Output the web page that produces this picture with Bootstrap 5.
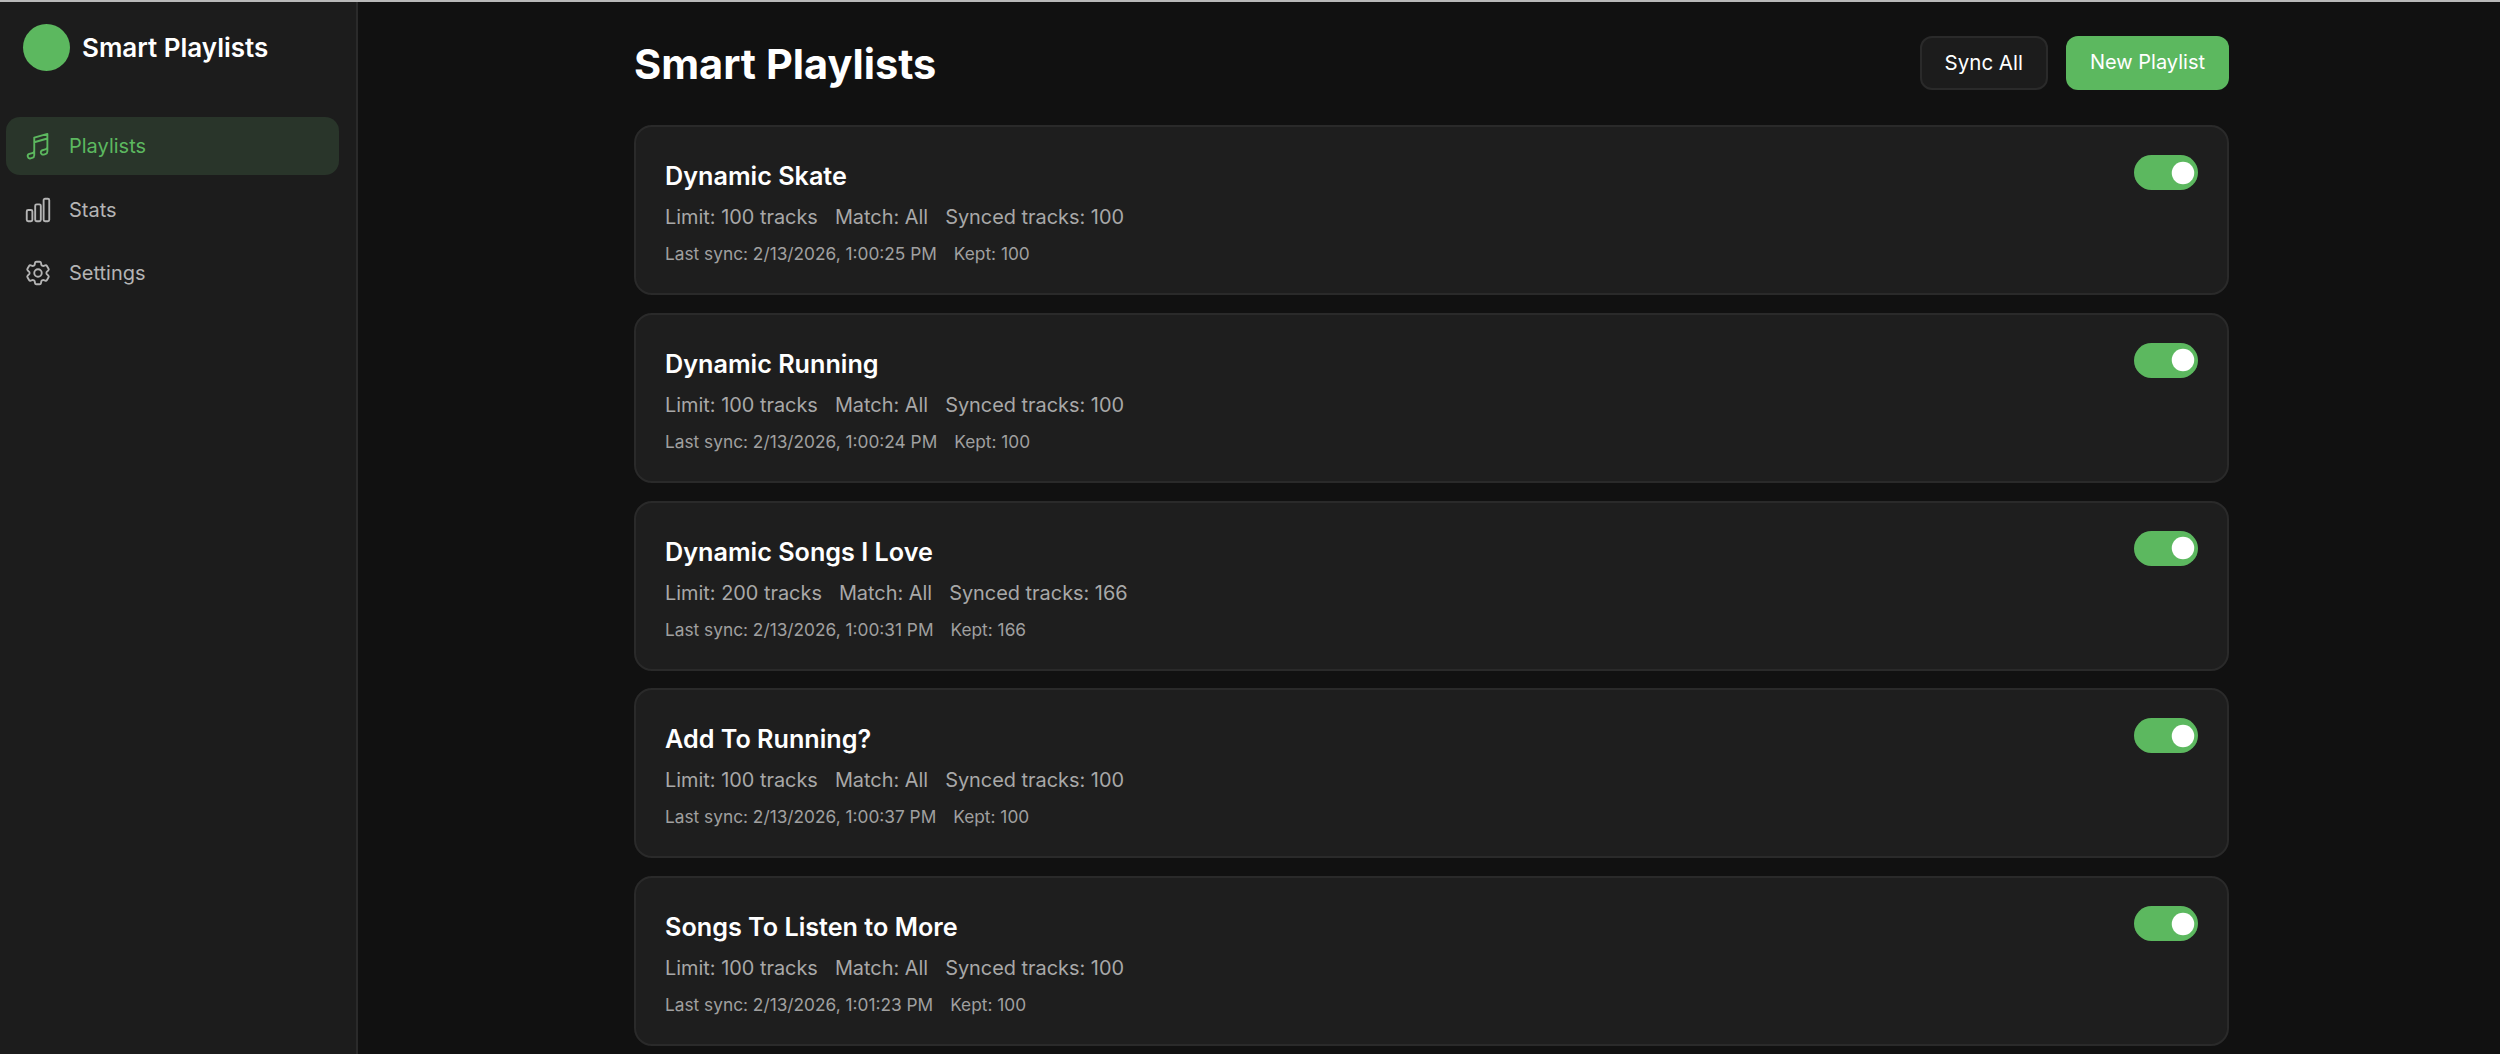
<!DOCTYPE html>
<html lang="en">
  <head>
    <meta charset="UTF-8" />
    <title>Smart Playlists</title>
    <meta name="viewport" content="width=device-width, initial-scale=1" />
    <link href="https://cdn.jsdelivr.net/npm/bootstrap@5.3.3/dist/css/bootstrap.min.css" rel="stylesheet" />
    <style>
      html, body {
        height: 100%;
        overflow: hidden;
      }
      body {
        font-family: "Inter", "Liberation Sans", sans-serif;
        background-color: #111111;
        color: #ffffff;
        border-top: 2px solid #b9b9b9;
      }
      .app-shell {
        height: 100%;
      }
      .side-panel {
        width: 358px;
        flex: 0 0 358px;
        background-color: #1c1c1c;
        border-right: 2px solid #2a2a2a;
        padding: 22px 17px 0 6px;
      }
      .brand-row {
        padding-left: 17px;
        gap: 12px;
        margin-bottom: 46px;
      }
      .brand-dot {
        width: 47px;
        height: 47px;
        border-radius: 50%;
        background-color: #5cb85f;
      }
      .brand-name {
        font-size: 26px;
        font-weight: 600;
      }
      .side-nav {
        gap: 5.5px;
      }
      .side-link {
        height: 58px;
        padding-left: 17px;
        gap: 16px;
        border-radius: 14px;
        font-size: 20px;
        color: #b4b4b4;
        text-decoration: none;
      }
      .side-link.is-active {
        background-color: #29352a;
        color: #5cb85f;
      }
      .side-link svg {
        width: 30px;
        height: 30px;
        flex: none;
      }
      .main-pane {
        padding-left: 5px;
      }
      .page-wrap {
        width: 1595px;
      }
      .page-head {
        height: 88px;
        padding-top: 34px;
        margin-bottom: 35px;
      }
      .page-name {
        font-size: 41.5px;
        font-weight: 700;
        margin: 3px 0 0;
      }
      .head-actions {
        gap: 18px;
      }
      .btn-sync, .btn-new {
        height: 54px;
        border-radius: 12px;
        font-size: 20px;
        font-weight: 400;
        padding: 0 24px;
      }
      .btn-sync {
        background-color: #1c1c1c;
        border: 2px solid #2a2a2a;
        color: #ffffff;
        font-size: 20.5px;
        padding: 0 23px;
      }
      .btn-new {
        background-color: #5cb85f;
        border: 0;
        color: #ffffff;
        padding-bottom: 2px;
      }
      .pl-item {
        height: 170px;
        background-color: #1e1e1e;
        border: 2px solid #2a2a2a;
        border-radius: 18px;
        padding: 28px 29px;
        margin-bottom: 17.75px;
      }
      .pl-name {
        font-size: 25.2px;
        font-weight: 600;
        line-height: 34px;
        margin: 4px 0 10px;
      }
      .pl-meta {
        font-size: 19.9px;
        line-height: 28px;
        color: #a8a8a8;
        gap: 17px;
        margin-bottom: 11px;
      }
      .pl-sub {
        font-size: 17.3px;
        line-height: 24px;
        color: #a0a0a0;
        gap: 17px;
      }
      .form-switch .pl-toggle {
        width: 64px;
        height: 35px;
        margin: 0;
        border: 0;
        border-radius: 18px;
        background-color: #5cb85f;
        background-size: 30px;
        background-position: right 2px center;
      }
    </style>
  </head>
  <body>
    <div class="app-shell d-flex">
      <aside class="side-panel">
        <div class="brand-row d-flex align-items-center">
          <span class="brand-dot"></span>
          <span class="brand-name">Smart Playlists</span>
        </div>
        <nav class="side-nav d-flex flex-column">
          <a class="side-link is-active d-flex align-items-center" href="#">
            <svg viewBox="0 0 24 24" fill="none" stroke="currentColor" stroke-width="1.5" stroke-linecap="round" stroke-linejoin="round"><path d="m9 9 10.5-3m0 6.553v3.75a2.25 2.25 0 0 1-1.632 2.163l-1.32.377a1.803 1.803 0 1 1-.99-3.467l2.31-.66a2.25 2.25 0 0 0 1.632-2.163Zm0 0V2.25L9 5.25v10.303m0 0v3.75a2.25 2.25 0 0 1-1.632 2.163l-1.32.377a1.803 1.803 0 0 1-.99-3.467l2.31-.66A2.25 2.25 0 0 0 9 15.553Z"/></svg>
            Playlists
          </a>
          <a class="side-link d-flex align-items-center" href="#">
            <svg viewBox="0 0 24 24" fill="none" stroke="currentColor" stroke-width="1.5" stroke-linecap="round" stroke-linejoin="round"><path d="M3 13.125C3 12.504 3.504 12 4.125 12h2.25c.621 0 1.125.504 1.125 1.125v6.75C7.5 20.496 6.996 21 6.375 21h-2.25A1.125 1.125 0 0 1 3 19.875v-6.75ZM9.75 8.625c0-.621.504-1.125 1.125-1.125h2.25c.621 0 1.125.504 1.125 1.125v11.25c0 .621-.504 1.125-1.125 1.125h-2.25a1.125 1.125 0 0 1-1.125-1.125V8.625ZM16.5 4.125c0-.621.504-1.125 1.125-1.125h2.25C20.496 3 21 3.504 21 4.125v15.75c0 .621-.504 1.125-1.125 1.125h-2.25a1.125 1.125 0 0 1-1.125-1.125V4.125Z"/></svg>
            Stats
          </a>
          <a class="side-link d-flex align-items-center" href="#">
            <svg viewBox="0 0 24 24" fill="none" stroke="currentColor" stroke-width="1.5" stroke-linecap="round" stroke-linejoin="round"><path d="M9.594 3.94c.09-.542.56-.94 1.11-.94h2.593c.55 0 1.02.398 1.11.94l.213 1.281c.063.374.313.686.645.87.074.04.147.083.22.127.325.196.72.257 1.075.124l1.217-.456a1.125 1.125 0 0 1 1.37.49l1.296 2.247a1.125 1.125 0 0 1-.26 1.431l-1.003.827c-.293.241-.438.613-.43.992a7.723 7.723 0 0 1 0 .255c-.008.378.137.75.43.991l1.004.827c.424.35.534.955.26 1.43l-1.298 2.247a1.125 1.125 0 0 1-1.369.491l-1.217-.456c-.355-.133-.75-.072-1.076.124a6.47 6.47 0 0 1-.22.128c-.331.183-.581.495-.644.869l-.213 1.281c-.09.543-.56.94-1.11.94h-2.594c-.55 0-1.019-.398-1.11-.94l-.213-1.281c-.062-.374-.312-.686-.644-.87a6.52 6.52 0 0 1-.22-.127c-.325-.196-.72-.257-1.076-.124l-1.217.456a1.125 1.125 0 0 1-1.369-.49l-1.297-2.247a1.125 1.125 0 0 1 .26-1.431l1.004-.827c.292-.24.437-.613.43-.991a6.932 6.932 0 0 1 0-.255c.007-.38-.138-.751-.43-.992l-1.004-.827a1.125 1.125 0 0 1-.26-1.43l1.297-2.247a1.125 1.125 0 0 1 1.37-.491l1.216.456c.356.133.751.072 1.076-.124.072-.044.146-.086.22-.128.332-.183.582-.495.644-.869l.214-1.28Z"/><path d="M15 12a3 3 0 1 1-6 0 3 3 0 0 1 6 0Z"/></svg>
            Settings
          </a>
        </nav>
      </aside>

      <main class="main-pane flex-grow-1">
        <div class="page-wrap mx-auto">
          <header class="page-head d-flex justify-content-between align-items-center">
            <h1 class="page-name">Smart Playlists</h1>
            <div class="head-actions d-flex">
              <button type="button" class="btn btn-sync">Sync All</button>
              <button type="button" class="btn btn-new">New Playlist</button>
            </div>
          </header>

          <section class="pl-item d-flex justify-content-between align-items-start">
            <div>
              <h2 class="pl-name">Dynamic Skate</h2>
              <div class="pl-meta d-flex"><span>Limit: 100 tracks</span><span>Match: All</span><span>Synced tracks: 100</span></div>
              <div class="pl-sub d-flex"><span>Last sync: 2/13/2026, 1:00:25 PM</span><span>Kept: 100</span></div>
            </div>
            <div class="form-check form-switch p-0 m-0"><input class="form-check-input pl-toggle" type="checkbox" role="switch" checked /></div>
          </section>

          <section class="pl-item d-flex justify-content-between align-items-start">
            <div>
              <h2 class="pl-name">Dynamic Running</h2>
              <div class="pl-meta d-flex"><span>Limit: 100 tracks</span><span>Match: All</span><span>Synced tracks: 100</span></div>
              <div class="pl-sub d-flex"><span>Last sync: 2/13/2026, 1:00:24 PM</span><span>Kept: 100</span></div>
            </div>
            <div class="form-check form-switch p-0 m-0"><input class="form-check-input pl-toggle" type="checkbox" role="switch" checked /></div>
          </section>

          <section class="pl-item d-flex justify-content-between align-items-start">
            <div>
              <h2 class="pl-name">Dynamic Songs I Love</h2>
              <div class="pl-meta d-flex"><span>Limit: 200 tracks</span><span>Match: All</span><span>Synced tracks: 166</span></div>
              <div class="pl-sub d-flex"><span>Last sync: 2/13/2026, 1:00:31 PM</span><span>Kept: 166</span></div>
            </div>
            <div class="form-check form-switch p-0 m-0"><input class="form-check-input pl-toggle" type="checkbox" role="switch" checked /></div>
          </section>

          <section class="pl-item d-flex justify-content-between align-items-start">
            <div>
              <h2 class="pl-name">Add To Running?</h2>
              <div class="pl-meta d-flex"><span>Limit: 100 tracks</span><span>Match: All</span><span>Synced tracks: 100</span></div>
              <div class="pl-sub d-flex"><span>Last sync: 2/13/2026, 1:00:37 PM</span><span>Kept: 100</span></div>
            </div>
            <div class="form-check form-switch p-0 m-0"><input class="form-check-input pl-toggle" type="checkbox" role="switch" checked /></div>
          </section>

          <section class="pl-item d-flex justify-content-between align-items-start">
            <div>
              <h2 class="pl-name">Songs To Listen to More</h2>
              <div class="pl-meta d-flex"><span>Limit: 100 tracks</span><span>Match: All</span><span>Synced tracks: 100</span></div>
              <div class="pl-sub d-flex"><span>Last sync: 2/13/2026, 1:01:23 PM</span><span>Kept: 100</span></div>
            </div>
            <div class="form-check form-switch p-0 m-0"><input class="form-check-input pl-toggle" type="checkbox" role="switch" checked /></div>
          </section>
        </div>
      </main>
    </div>
  </body>
</html>
